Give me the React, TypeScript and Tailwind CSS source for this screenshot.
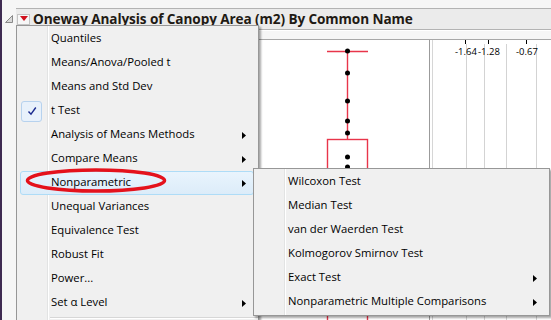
import React from "react";

type Item = { label: string; arrow?: boolean; checked?: boolean; active?: boolean };

const mainItems: Item[] = [
  { label: "Quantiles" },
  { label: "Means/Anova/Pooled t" },
  { label: "Means and Std Dev" },
  { label: "t Test", checked: true },
  { label: "Analysis of Means Methods", arrow: true },
  { label: "Compare Means", arrow: true },
  { label: "Nonparametric", arrow: true, active: true },
  { label: "Unequal Variances" },
  { label: "Equivalence Test" },
  { label: "Robust Fit" },
  { label: "Power..." },
  { label: "Set α Level", arrow: true },
];

const subItems: Item[] = [
  { label: "Wilcoxon Test" },
  { label: "Median Test" },
  { label: "van der Waerden Test" },
  { label: "Kolmogorov Smirnov Test" },
  { label: "Exact Test", arrow: true },
  { label: "Nonparametric Multiple Comparisons", arrow: true },
];

const Arrow = () => (
  <svg width="4" height="7" viewBox="0 0 4 7" className="shrink-0">
    <path d="M0 0 L4 3.5 L0 7 Z" fill="#000" />
  </svg>
);

const MenuRow = ({ item }: { item: Item }) => (
  <div
    className={
      "flex items-center h-[24px] ml-[3px] mr-[4px] pr-[7px] border rounded-[3px] " +
      (item.active
        ? "border-[#aedcf7] bg-gradient-to-b from-[#e9f4fd] to-[#dcecf9]"
        : "border-transparent")
    }
  >
    <div className="w-[29px] h-full flex items-center shrink-0">
      {item.checked && (
        <div className="w-[21px] h-[21px] flex items-center justify-center rounded-[3px] border border-[#b7d2ee] bg-[#e8f1fb]">
          <svg width="10" height="10" viewBox="0 0 10 10">
            <path d="M1.5 5.5 L4 8.2 L8.8 1.5" stroke="#1b2b8f" strokeWidth="1.4" fill="none" />
          </svg>
        </div>
      )}
    </div>
    <span className="flex-1 pl-[1px] -mt-[1px] text-black whitespace-nowrap">{item.label}</span>
    {item.arrow && <Arrow />}
  </div>
);

const Menu = ({ items, className, separator }: { items: Item[]; className: string; separator?: boolean }) => (
  <div
    className={
      "absolute border border-[#979797] bg-[#f0f0f0] shadow-[2px_2px_2px_rgba(0,0,0,0.35)] " + className
    }
  >
    <div className="absolute left-[30px] top-0 bottom-0 w-[1px] bg-[#e2e3e3]" />
    <div className="absolute left-[31px] top-0 bottom-0 w-[1px] bg-white" />
    <div className="relative py-[1px]">
      {items.map((it) => (
        <MenuRow key={it.label} item={it} />
      ))}
      {separator && (
        <div className="ml-[33px] mt-[2px]">
          <div className="h-[1px] bg-[#d7d7d7]" />
          <div className="h-[1px] bg-white" />
        </div>
      )}
    </div>
  </div>
);

const Chart = () => {
  const dots = [51, 73, 101, 121, 133, 157, 167];
  return (
    <svg width="535" height="280" viewBox="16 40 535 280" className="block">
      <rect x="16" y="40" width="535" height="280" fill="#fff" />
      <line x1="429.5" y1="40" x2="429.5" y2="320" stroke="#9b9b9b" />
      <line x1="432.5" y1="40" x2="432.5" y2="320" stroke="#d6d6d6" />
      {[466, 484, 506, 536].map((x) => (
        <line key={x} x1={x + 0.5} y1="44" x2={x + 0.5} y2="320" stroke="#d3d3d3" />
      ))}
      {[465, 488, 526].map((x) => (
        <line key={x} x1={x + 0.5} y1="40" x2={x + 0.5} y2="44" stroke="#000" />
      ))}
      <g fontSize="9.5" fill="#000" fontFamily="'Open Sans', sans-serif" textAnchor="middle">
        <text x="466" y="55">-1.64</text>
        <text x="489" y="55">-1.28</text>
        <text x="527" y="55">-0.67</text>
      </g>
      <g stroke="#e8354a" strokeWidth="1.4" fill="none">
        <line x1="327" y1="51.5" x2="368" y2="51.5" />
        <line x1="347.5" y1="51" x2="347.5" y2="139" />
        <rect x="327.5" y="139.5" width="40" height="200" />
      </g>
      {dots.map((y) => (
        <circle key={y} cx="347.5" cy={y} r="2.5" fill="#000" />
      ))}
    </svg>
  );
};

const App = () => {
  return (
    <div className="relative w-[551px] h-[320px] overflow-hidden bg-[#f6f6f6] flex font-['Open_Sans',sans-serif] text-[11.3px]">
      <div className="w-[2px] shrink-0 bg-[#3f2c52]" />
      <div className="flex-1 flex flex-col pt-[8px]">
        <div className="flex items-stretch h-[22px]">
          <div className="w-[14px] shrink-0 flex items-center justify-center">
            <svg width="8" height="8" viewBox="0 0 8 8">
              <path d="M7.5 0.5 L7.5 7.5 L0.5 7.5 Z" fill="#d8d8d8" stroke="#8a8a8a" />
            </svg>
          </div>
          <div className="flex-1 flex items-center gap-[3px] bg-[#ebebeb] border-y border-[#b3b3b3] pl-[1px]">
            <div className="w-[13px] h-[11px] border border-[#c4c4c4] bg-[#f7f7f7] flex items-start justify-center pt-[1px]">
              <svg width="8" height="5" viewBox="0 0 8 5">
                <path d="M0 0 L8 0 L4 5 Z" fill="#d0101c" />
              </svg>
            </div>
            <span className="font-bold text-[13.6px] tracking-[-0.1px] text-[#1f1a14] whitespace-nowrap">
              Oneway Analysis of Canopy Area (m2) By Common Name
            </span>
          </div>
        </div>
        <div className="h-[10px] ml-[14px] bg-[#f6f6f6] border-t border-t-white border-b border-b-[#a8a8a8]" />
        <div className="flex-1 ml-[14px] bg-white overflow-hidden">
          <Chart />
        </div>
      </div>

      <Menu items={mainItems} className="left-[16px] top-[25px] w-[243px] h-[310px]" separator />
      <Menu items={subItems} className="left-[253px] top-[168px] w-[297px]" />

      <svg className="absolute left-[24px] top-[165px]" width="150" height="32" viewBox="24 165 150 32">
        <ellipse cx="96" cy="180.5" rx="68.5" ry="10.5" fill="none" stroke="#e4121c" strokeWidth="3.5" />
      </svg>
    </div>
  );
};

export default App;
